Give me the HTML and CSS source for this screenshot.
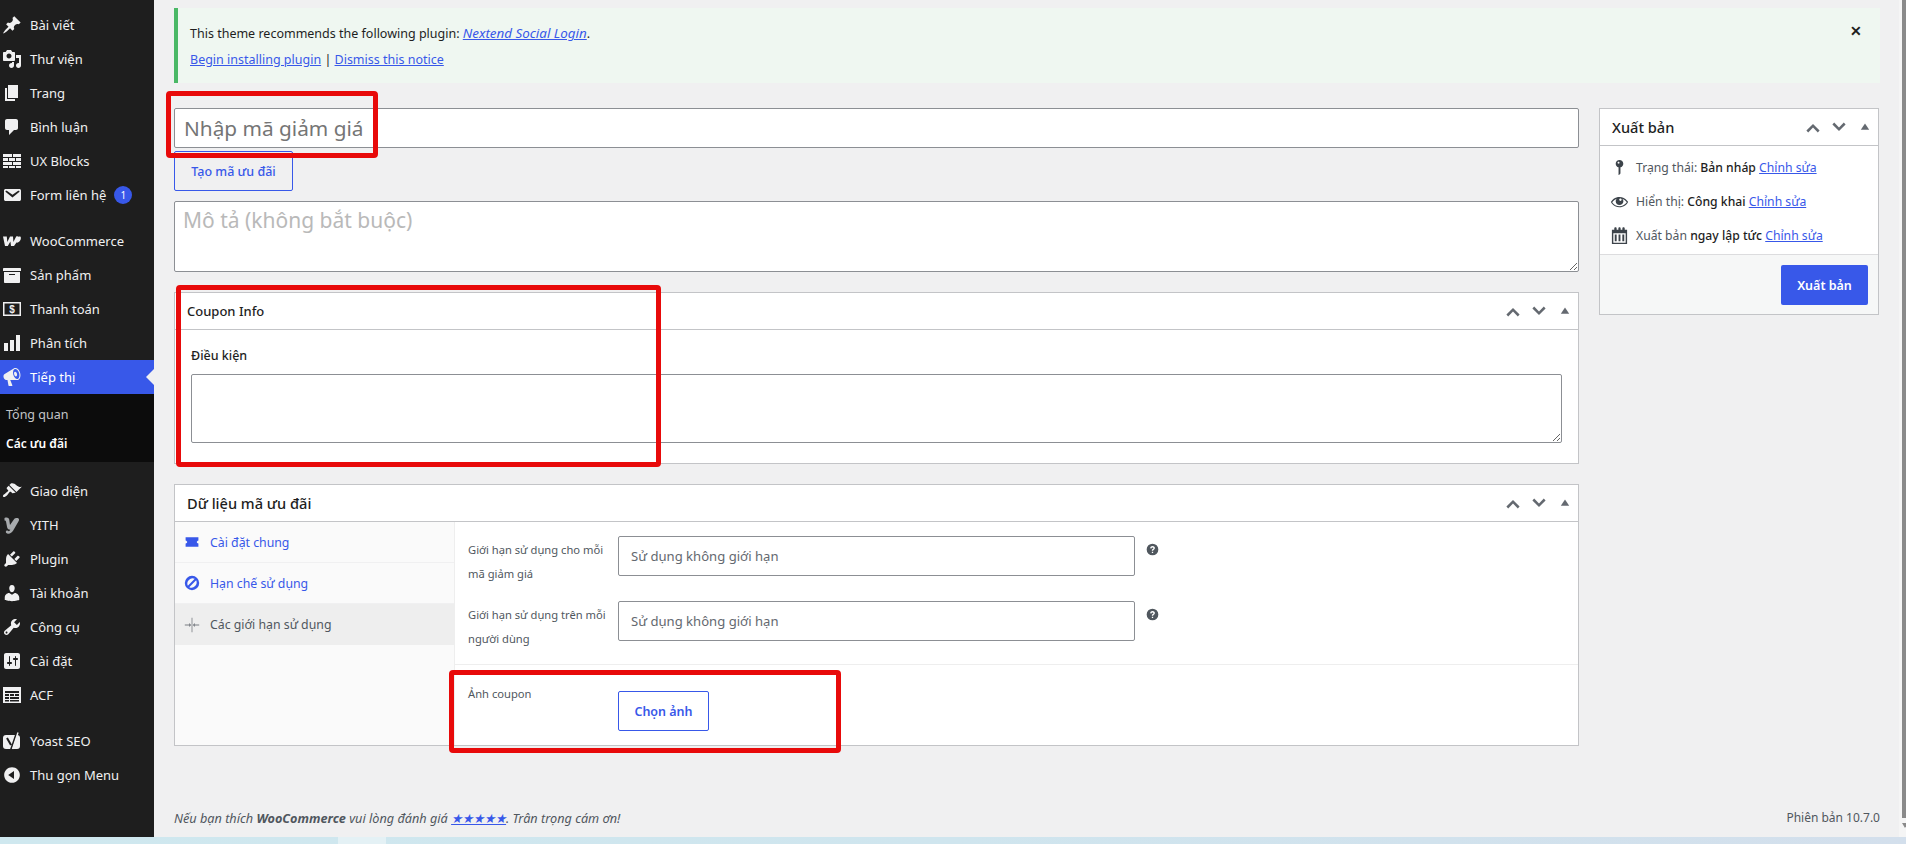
FILE: index.html
```html
<!DOCTYPE html>
<html lang="vi">
<head>
<meta charset="utf-8">
<title>Thêm mã ưu đãi</title>
<link rel="stylesheet" href="styles.css">
</head>
<body>
<svg class="sprite" aria-hidden="true">
<symbol id="i-post" viewBox="0 0 20 20"><path d="M10.44 3.02l1.82-1.82 6.36 6.35-1.83 1.82c-1.05-.68-2.48-.57-3.41.36l-.75.75c-.92.93-1.04 2.35-.35 3.41l-1.83 1.82-2.41-2.41-2.8 2.79c-.42.42-3.38 2.71-3.8 2.29s1.86-3.39 2.28-3.81l2.79-2.79L4.1 9.36l1.83-1.82c1.05.69 2.48.57 3.4-.36l.75-.75c.93-.92 1.05-2.35.36-3.41z"/></symbol>
<symbol id="i-media" viewBox="0 0 20 20"><path d="M13 11V4c0-.55-.45-1-1-1h-1.67L9 1H5L3.67 3H2c-.55 0-1 .45-1 1v7c0 .55.45 1 1 1h10c.55 0 1-.45 1-1zM7 4.5c1.38 0 2.5 1.12 2.5 2.5S8.38 9.5 7 9.5 4.5 8.38 4.5 7 5.62 4.5 7 4.5zM14 6h5v10.5c0 1.38-1.12 2.5-2.5 2.5S14 17.88 14 16.5s1.12-2.5 2.5-2.5c.17 0 .34.02.5.05V9h-3V6zm-4 8.05V13h2v3.5c0 1.38-1.12 2.5-2.5 2.5S7 17.88 7 16.5 8.12 14 9.5 14c.17 0 .34.02.5.05z"/></symbol>
<symbol id="i-page" viewBox="0 0 20 20"><path d="M6 15V2h10v13H6zm-1 1h8v2H3V5h2v11z"/></symbol>
<symbol id="i-comment" viewBox="0 0 20 20"><path d="M5 2h9c1.1 0 2 .9 2 2v7c0 1.1-.9 2-2 2h-2l-5 5v-5H5c-1.1 0-2-.9-2-2V4c0-1.1.9-2 2-2z"/></symbol>
<symbol id="i-blocks" viewBox="0 0 20 20"><path d="M1 3h9v3H1zM11 3h8v3h-8zM1 7h5v3H1zM7 7h6v3H7zM14 7h5v3h-5zM1 11h9v3H1zM11 11h8v3h-8zM1 15h5v2H1zM7 15h6v2H7zM14 15h5v2h-5z"/></symbol>
<symbol id="i-mail" viewBox="0 0 20 20"><path d="M3.87 4h13.25C18.37 4 19 4.59 19 5.79v8.42c0 1.19-.63 1.79-1.88 1.79H3.87c-1.25 0-1.88-.6-1.88-1.79V5.79c0-1.2.63-1.79 1.88-1.79zm6.62 8.6l6.74-5.53c.24-.2.43-.66.13-1.07-.29-.41-.82-.42-1.17-.17l-5.7 3.86L4.8 5.83c-.35-.25-.88-.24-1.17.17-.3.41-.11.87.13 1.07z"/></symbol>
<symbol id="i-woo" viewBox="0 0 20 20"><path d="M1 5.500h3.800l.5 5.500 2.700-5.500h3l.4 5.500 2.800-5.500c1-.5 2-.2 2.600.3 1.100-.5 2-.2 2.100 1 .2 1.800-1.200 4-3 4.700-.5.200-1 .2-1.400 0L12 15h-3l-.6-4.500L5.800 15H3z"/></symbol>
<symbol id="i-archive" viewBox="0 0 20 20"><path d="M19 4v2H1V4c0-.55.45-1 1-1h16c.55 0 1 .45 1 1zM2 7h16v10c0 .55-.45 1-1 1H3c-.55 0-1-.45-1-1V7zm11 3V9H7v1h6z"/></symbol>
<symbol id="i-pay" viewBox="0 0 20 20"><path fill-rule="evenodd" d="M1 3h18v14H1zM2.500 4.500v11h15v-11z"/><text x="10" y="14" text-anchor="middle" font-size="10" font-weight="700" font-family="Liberation Sans, sans-serif">$</text></symbol>
<symbol id="i-chart" viewBox="0 0 20 20"><path d="M18 18V2h-4v16h4zm-6 0V7H8v11h4zm-6 0v-8H2v8h4z"/></symbol>
<symbol id="i-mega" viewBox="0 0 20 20"><path d="M18.150 5.940c.46 1.620.38 3.220-.02 4.480-.42 1.280-1.260 2.180-2.300 2.480-.16.06-.26.06-.4.06-.06.02-.12.02-.18.02-.06.02-.14.02-.22.02h-6.800l2.220 5.500c.02.14-.06.26-.14.34-.08.1-.24.16-.34.16H6.950c-.1 0-.26-.06-.34-.16-.08-.08-.16-.2-.14-.34l-1-5.500H4.250l-.02-.02c-.5.06-1.080-.18-1.540-.62s-.88-1.080-1.060-1.880c-.24-.8-.2-1.560-.02-2.200.18-.62.58-1.080 1.060-1.300l.02-.02 9-5.400c.1-.06.18-.1.24-.16.06-.04.14-.08.24-.12.16-.08.28-.12.5-.18 1.040-.3 2.240.1 3.220.98s1.840 2.240 2.260 3.860zm-2.580 5.980h-.02c.4-.1.74-.34 1.040-.7.58-.7.86-1.760.86-3.040-.02-.64-.1-1.300-.28-1.980-.34-1.360-1.020-2.500-1.780-3.240s-1.680-1.100-2.460-.88c-.82.22-1.400.96-1.700 2-.32 1.040-.28 2.360.06 3.720.38 1.360 1 2.500 1.800 3.240.78.74 1.620 1.100 2.480.88zm-2.540-7.080c.22-.04.42-.02.62.04.38.16.76.48 1.020 1s.42 1.200.42 1.780c0 .3-.04.56-.12.8-.18.48-.44.84-.86.94-.34.1-.8-.06-1.140-.46-.38-.4-.68-.94-.84-1.600-.16-.68-.14-1.320.02-1.800.18-.48.44-.8.88-.9z"/></symbol>
<symbol id="i-brush" viewBox="0 0 20 20"><path d="M14.480 11.060L7.410 3.990l1.500-1.500c.5-.56 2.300-.47 3.510.32 1.210.8 1.430 1.280 2.910 2.100 1.180.64 2.450 1.260 4.450.85zm-.71.71L6.700 4.700 4.930 6.470c-.39.39-.39 1.020 0 1.410l1.060 1.060c.39.39.39 1.030 0 1.420-.6.6-1.430 1.110-2.210 1.690-.35.26-.7.53-1.010.84C1.430 13.230.4 14.980 1.200 15.800c.81.8 2.570-.23 3.910-1.570.31-.31.58-.66.85-1.010.58-.78 1.080-1.610 1.690-2.210.39-.39 1.020-.39 1.410 0l1.060 1.060c.39.39 1.020.39 1.410 0z"/></symbol>
<symbol id="i-yith" viewBox="0 0 20 20"><path d="M2.500 3c2.300-1 4.300-.4 4.700 1.500L8 10l4.200-6c.8-1 2.300-1.300 3.500-1 1.500.4 1.700 1.900 1 3l-5.500 9.500c-1.200 2-3.200 3.500-5.400 3.200-1.700-.2-2.500-1.600-1.700-2.700.8-.9 2-.5 2.600.3.700-.2 1.200-.8 1.600-1.600-2 0-3-1.100-3.300-3L4 6.500c-.1-.8-.6-1.100-1.500-1z"/></symbol>
<symbol id="i-plugin" viewBox="0 0 20 20"><path d="M13.110 4.360L9.870 7.600 8 5.730l3.240-3.240c.35-.34 1.050-.2 1.560.32.52.51.66 1.210.31 1.550zm-8 1.770l.91-1.120 9.010 9.010-1.190.84c-.71.71-2.630 1.160-3.820 1.160H6.140L4.900 17.260c-.59.59-1.540.59-2.120 0-.59-.58-.59-1.530 0-2.120l1.240-1.240v-3.880c0-1.130.4-3.190 1.090-3.890zm7.260 3.970l3.240-3.240c.34-.35 1.040-.21 1.550.31.52.51.66 1.210.31 1.550l-3.240 3.250z"/></symbol>
<symbol id="i-user" viewBox="0 0 20 20"><path d="M10 9.250c-2.270 0-2.730-3.440-2.730-3.440C7 4.020 7.820 2 9.970 2c2.160 0 2.980 2.020 2.710 3.810 0 0-.41 3.440-2.680 3.440zm0 2.570L12.720 10c2.390 0 4.520 2.330 4.520 4.530v2.490s-3.650 1.130-7.240 1.130c-3.650 0-7.240-1.130-7.240-1.130v-2.490c0-2.250 1.940-4.480 4.470-4.480z"/></symbol>
<symbol id="i-tool" viewBox="0 0 20 20"><path d="M16.680 9.770c-1.340 1.340-3.300 1.670-4.950.99l-5.410 6.520c-.99.99-2.590.99-3.580 0s-.99-2.590 0-3.570l6.520-5.420c-.68-1.650-.35-3.610.99-4.950 1.280-1.280 3.120-1.620 4.720-1.060l-2.890 2.890 2.820 2.820 2.860-2.870c.53 1.580.18 3.390-1.080 4.650zM3.810 16.210c.4.39 1.040.39 1.430 0 .4-.4.4-1.040 0-1.430-.39-.4-1.030-.4-1.430 0-.39.39-.39 1.030 0 1.430z"/></symbol>
<symbol id="i-settings" viewBox="0 0 20 20"><path d="M18 16V4c0-1.100-.9-2-2-2H4c-1.100 0-2 .9-2 2v12c0 1.100.9 2 2 2h12c1.100 0 2-.9 2-2zM8 11h1c.55 0 1 .45 1 1s-.45 1-1 1H8v1.500c0 .28-.22.5-.5.5s-.5-.22-.5-.5V13H6c-.55 0-1-.45-1-1s.45-1 1-1h1V5.500c0-.28.22-.5.5-.5s.5.22.5.5V11zm5-2h-1c-.55 0-1-.45-1-1s.45-1 1-1h1V5.500c0-.28.22-.5.5-.5s.5.22.5.5V7h1c.55 0 1 .45 1 1s-.45 1-1 1h-1v5.500c0 .28-.22.5-.5.5s-.5-.22-.5-.5V9z"/></symbol>
<symbol id="i-acf" viewBox="0 0 20 20"><path fill-rule="evenodd" d="M1 2h18v16H1zM3 6v2h14V6zM3 9v2h4V9zM3 12v2h4v-2zM3 15v1.500h4V15zM8 9v2h4V9zM8 12v2h9v-2zM8 15v1.500h9V15zM13 9v2h4V9z"/></symbol>
<symbol id="i-yoast" viewBox="0 0 20 20"><rect x="1" y="4" width="17" height="14" rx="3"/><path d="M5 7l4 7M14.500 2.500L9 18.500" fill="none" stroke="#1e1e1e" stroke-width="2"/><path d="M16 1.500L10.500 18" fill="none" stroke="#f0f0f1" stroke-width="1.400"/></symbol>
<symbol id="i-collapse" viewBox="0 0 20 20"><path d="M10 2.160c4.330 0 7.840 3.510 7.840 7.840s-3.510 7.840-7.840 7.840S2.160 14.330 2.160 10 5.710 2.160 10 2.160zm2 11.720V6.120L6.180 9.970z"/></symbol>
<symbol id="i-status" viewBox="0 0 20 20"><path d="M14 6c0 1.860-1.280 3.410-3 3.860V16c0 1-2 2-2 2V9.860c-1.720-.45-3-2-3-3.860 0-2.210 1.790-4 4-4s4 1.790 4 4zM8 5c0 .55.45 1 1 1s1-.45 1-1-.45-1-1-1-1 .45-1 1z"/></symbol>
<symbol id="i-eye" viewBox="0 0 20 20"><path d="M18.300 9.500C15 4.900 8.500 3.800 3.900 7.200c-1.200.9-2.200 2.100-3 3.400.2.400.5.8.8 1.200 3.300 4.600 9.600 5.600 14.200 2.400.9-.7 1.700-1.400 2.400-2.400.3-.4.5-.8.8-1.200-.3-.4-.5-.8-.8-1.100zm-8.200-2.300c.5-.5 1.300-.5 1.800 0s.5 1.300 0 1.800-1.300.5-1.800 0c-.5-.4-.5-1.300 0-1.800zm-.1 7.700c-3.100 0-6-1.600-7.700-4.200C3.500 9 5.100 7.800 7 7c-.7.800-1 1.700-1 2.700 0 2.200 1.700 4.100 4 4.100 2.200 0 4.100-1.700 4.100-4 0-1-.4-2-1.100-2.700 1.900.8 3.500 2 4.700 3.700-1.700 2.600-4.600 4.200-7.700 4.100z"/></symbol>
<symbol id="i-cal" viewBox="0 0 20 20"><path fill-rule="evenodd" d="M2 4h2.500V2.500C4.500 1.700 5 1.200 5.800 1.200S7 1.700 7 2.500V4h1.800V2.500c0-.8.5-1.300 1.200-1.300s1.200.5 1.200 1.300V4H13V2.500c0-.8.5-1.300 1.200-1.300s1.300.5 1.300 1.300V4H18v15H2zM3.500 7.500v10h13v-10zM5 9h2v7H5zM9 9h2v7H9zM13 9h2v7h-2z"/></symbol>
<symbol id="i-ticket" viewBox="0 0 20 20"><path d="M2 4h16v4c-1.200.4-2 1.100-2 2s.8 1.600 2 2v4H2v-4c1.200-.4 2-1.100 2-2s-.8-1.600-2-2z"/></symbol>
<symbol id="i-ban" viewBox="0 0 20 20"><path fill-rule="evenodd" d="M10 1a9 9 0 1 1 0 18 9 9 0 0 1 0-18zM4.800 13.400L13.400 4.800A6.500 6.500 0 0 0 4.800 13.400zM6.600 15.200A6.500 6.500 0 0 0 15.200 6.600z"/></symbol>
<symbol id="i-split" viewBox="0 0 20 20"><path d="M9.500 1h1v18h-1zM1 9.500h5.500V7.500L9 10l-2.500 2.500v-2H1zM19 9.500h-5.500V7.500L11 10l2.500 2.500v-2H19z"/></symbol>
<symbol id="i-up" viewBox="0 0 20 20"><path d="M3.400 13.600L10 7l6.600 6.600-1.800 1.800L10 10.600l-4.800 4.800z"/></symbol>
<symbol id="i-down" viewBox="0 0 20 20"><path d="M3.400 7.400L10 14l6.600-6.600-1.800-1.800L10 10.400 5.200 5.600z"/></symbol>
<symbol id="i-tri" viewBox="0 0 20 20"><path d="M10 5l6 9H4z"/></symbol>
<symbol id="i-help" viewBox="0 0 20 20"><path d="M10 1a9 9 0 1 0 0 18 9 9 0 0 0 0-18zm1 14.500H9V13.500h2zm2.600-7c-.3.900-1 1.400-1.600 1.900-.6.400-1 .8-1 1.600H9c0-1.400.7-2.100 1.400-2.600.6-.4 1-.7 1-1.400 0-.7-.6-1.100-1.400-1.100-.9 0-1.500.5-1.600 1.400l-2-.3C6.600 5.800 8.100 4.600 10 4.600c2.400 0 4.100 1.700 3.600 3.900z"/></symbol>
</svg>

<div class="screen">
  <nav class="menu">
    <a class="item"><svg class="mi"><use href="#i-post"/></svg>Bài viết</a>
    <a class="item"><svg class="mi"><use href="#i-media"/></svg>Thư viện</a>
    <a class="item"><svg class="mi"><use href="#i-page"/></svg>Trang</a>
    <a class="item"><svg class="mi"><use href="#i-comment"/></svg>Bình luận</a>
    <a class="item"><svg class="mi"><use href="#i-blocks"/></svg>UX Blocks</a>
    <a class="item"><svg class="mi"><use href="#i-mail"/></svg>Form liên hệ<span class="badge">1</span></a>
    <div class="sep"></div>
    <a class="item"><svg class="mi"><use href="#i-woo"/></svg>WooCommerce</a>
    <a class="item"><svg class="mi"><use href="#i-archive"/></svg>Sản phẩm</a>
    <a class="item"><svg class="mi"><use href="#i-pay"/></svg>Thanh toán</a>
    <a class="item"><svg class="mi"><use href="#i-chart"/></svg>Phân tích</a>
    <a class="item active"><svg class="mi"><use href="#i-mega"/></svg>Tiếp thị</a>
    <div class="submenu">
      <a class="subitem">Tổng quan</a>
      <a class="subitem current">Các ưu đãi</a>
    </div>
    <div class="sep"></div>
    <a class="item"><svg class="mi"><use href="#i-brush"/></svg>Giao diện</a>
    <a class="item"><svg class="mi dim"><use href="#i-yith"/></svg>YITH</a>
    <a class="item"><svg class="mi"><use href="#i-plugin"/></svg>Plugin</a>
    <a class="item"><svg class="mi"><use href="#i-user"/></svg>Tài khoản</a>
    <a class="item"><svg class="mi"><use href="#i-tool"/></svg>Công cụ</a>
    <a class="item"><svg class="mi"><use href="#i-settings"/></svg>Cài đặt</a>
    <a class="item"><svg class="mi"><use href="#i-acf"/></svg>ACF</a>
    <div class="sep"></div>
    <a class="item"><svg class="mi"><use href="#i-yoast"/></svg>Yoast SEO</a>
    <a class="item"><svg class="mi"><use href="#i-collapse"/></svg>Thu gọn Menu</a>
  </nav>

  <main class="main">
    <div class="notice">
      <p class="notice-line">This theme recommends the following plugin: <a class="link"><em class="plugin-name">Nextend Social Login</em></a>.</p>
      <p class="notice-line"><a class="link">Begin installing plugin</a> | <a class="link">Dismiss this notice</a></p>
      <span class="notice-close">✕</span>
    </div>

    <div class="columns">
      <div class="col-main">
        <input class="title-input" type="text" placeholder="Nhập mã giảm giá">
        <button class="btn-outline create-btn" type="button">Tạo mã ưu đãi</button>
        <textarea class="desc-input" placeholder="Mô tả (không bắt buộc)"></textarea>

        <section class="box info-box">
          <header class="box-head">
            <h2 class="box-title">Coupon Info</h2>
            <div class="ctrls"><svg class="ctrl"><use href="#i-up"/></svg><svg class="ctrl"><use href="#i-down"/></svg><svg class="ctrl tri"><use href="#i-tri"/></svg></div>
          </header>
          <div class="info-body">
            <label class="info-label">Điều kiện</label>
            <textarea class="info-text"></textarea>
          </div>
        </section>

        <section class="box data-box">
          <header class="box-head">
            <h2 class="box-title wide">Dữ liệu mã ưu đãi</h2>
            <div class="ctrls"><svg class="ctrl"><use href="#i-up"/></svg><svg class="ctrl"><use href="#i-down"/></svg><svg class="ctrl tri"><use href="#i-tri"/></svg></div>
          </header>
          <div class="data-body">
            <ul class="tabs">
              <li class="tab"><svg class="ti"><use href="#i-ticket"/></svg>Cài đặt chung</li>
              <li class="tab"><svg class="ti"><use href="#i-ban"/></svg>Hạn chế sử dụng</li>
              <li class="tab on"><svg class="ti"><use href="#i-split"/></svg>Các giới hạn sử dụng</li>
            </ul>
            <div class="panel">
              <div class="limits">
                <div class="field">
                  <label class="field-label">Giới hạn sử dụng cho mỗi mã giảm giá</label>
                  <input class="field-input" type="text" placeholder="Sử dụng không giới hạn">
                  <svg class="help"><use href="#i-help"/></svg>
                </div>
                <div class="field">
                  <label class="field-label">Giới hạn sử dụng trên mỗi người dùng</label>
                  <input class="field-input" type="text" placeholder="Sử dụng không giới hạn">
                  <svg class="help"><use href="#i-help"/></svg>
                </div>
              </div>
              <div class="field image-field">
                <label class="field-label short">Ảnh coupon</label>
                <button class="btn-outline pick-btn" type="button">Chọn ảnh</button>
              </div>
            </div>
          </div>
        </section>
      </div>

      <aside class="box side-box">
        <header class="box-head side-head">
          <h2 class="box-title wide">Xuất bản</h2>
          <div class="ctrls"><svg class="ctrl"><use href="#i-up"/></svg><svg class="ctrl"><use href="#i-down"/></svg><svg class="ctrl tri"><use href="#i-tri"/></svg></div>
        </header>
        <div class="side-rows">
          <div class="side-row"><svg class="si"><use href="#i-status"/></svg><span>Trạng thái: <b class="strong">Bản nháp</b> <a class="link">Chỉnh sửa</a></span></div>
          <div class="side-row"><svg class="si"><use href="#i-eye"/></svg><span>Hiển thị: <b class="strong">Công khai</b> <a class="link">Chỉnh sửa</a></span></div>
          <div class="side-row"><svg class="si"><use href="#i-cal"/></svg><span>Xuất bản <b class="strong">ngay lập tức</b> <a class="link">Chỉnh sửa</a></span></div>
        </div>
        <div class="side-foot"><button class="btn-primary" type="button">Xuất bản</button></div>
      </aside>
    </div>

    <footer class="foot">
      <span class="foot-text">Nếu bạn thích <b>WooCommerce</b> vui lòng đánh giá <a class="link">★★★★★</a>. Trân trọng cám ơn!</span>
      <span class="foot-ver">Phiên bản 10.7.0</span>
    </footer>
  </main>

  <div class="scrollbar"><div class="thumb"></div><div class="arrow"></div></div>
</div>
<div class="strip"></div>

<div class="mark mark-a"></div>
<div class="mark mark-b"></div>
<div class="mark mark-c"></div>
</body>
</html>
```

FILE: styles.css
```css
* { box-sizing: border-box; }
html, body { margin: 0; height: 844px; overflow: hidden; }
body {
  position: relative;
  font-family: "Noto Sans", "Open Sans", sans-serif;
  font-size: 12.5px;
  color: #1e1e1e;
  background: #f0f0f1;
}
.sprite { display: none; }

.screen { display: flex; height: 837px; }
.strip {
  height: 7px;
  background:
    linear-gradient(#e4f1f5, #e4f1f5) 338px 0 / 48px 100% no-repeat,
    linear-gradient(90deg, #cfe8ef, #cfe5ee 50%, #d3dfec);
}

/* side menu */
.menu {
  width: 154px;
  flex: none;
  padding-top: 8px;
  background: #1e1e1e;
  color: #f0f0f1;
  display: flex;
  flex-direction: column;
}
.item {
  height: 34px;
  flex: none;
  display: flex;
  align-items: center;
  gap: 8px;
  padding-left: 2px;
  position: relative;
  font-size: 13px;
  white-space: nowrap;
}
.mi { width: 20px; height: 20px; fill: #f0f0f1; flex: none; }
.mi.dim { fill: #a7aaad; }
.sep { height: 12px; flex: none; }
.badge {
  width: 18px;
  height: 18px;
  border-radius: 50%;
  background: #3858e9;
  color: #fff;
  font-size: 10px;
  display: flex;
  align-items: center;
  justify-content: center;
}
.item.active { background: #3858e9; color: #fff; }
.item.active::after {
  content: "";
  position: absolute;
  right: 0;
  top: 50%;
  margin-top: -8px;
  border: 8px solid transparent;
  border-right-color: #f0f0f1;
  border-left-width: 0;
}
.submenu {
  height: 68px;
  flex: none;
  background: #0c0c0c;
  padding-top: 6px;
  display: flex;
  flex-direction: column;
}
.subitem { height: 29px; line-height: 29px; padding-left: 6px; color: #c3c4c7; font-size: 12.5px; }
.subitem.current { color: #fff; font-weight: 600; font-size: 12px; }

/* content */
.main {
  flex: 1;
  min-width: 0;
  padding: 8px 19px 0 20px;
  display: flex;
  flex-direction: column;
}
.link { color: #3858e9; text-decoration: underline; }
.notice {
  position: relative;
  height: 75px;
  flex: none;
  padding: 15px 12px 0 12px;
  border-left: 4px solid #4ab866;
  background: #eff7f1;
}
.notice-line { margin: 0 0 6px; line-height: 20px; font-size: 12.5px; }
.plugin-name { font-size: 13.400px; }
.notice-close {
  position: absolute;
  right: 18px;
  top: 13px;
  font-size: 14px;
  line-height: 20px;
  font-weight: 700;
  color: #1e1e1e;
}
.columns {
  display: grid;
  grid-template-columns: 1405px 280px;
  gap: 20px;
  align-items: start;
  margin-top: 25px;
}
.col-main { display: flex; flex-direction: column; align-items: stretch; }
.title-input {
  height: 40px;
  padding: 0 9px;
  border: 1px solid #8c8f94;
  border-radius: 2px;
  background: #fff;
  font: 20.800px "Noto Sans", sans-serif;
  outline: none;
}
.title-input::placeholder { color: #757575; opacity: 1; }
.btn-outline {
  border: 1px solid #3858e9;
  border-radius: 2px;
  background: transparent;
  color: #3858e9;
  font: 500 12.5px "Noto Sans", sans-serif;
  padding: 0;
}
.create-btn { width: 119px; height: 40px; margin-top: 3px; }
.desc-input {
  height: 71px;
  margin-top: 10px;
  padding: 4px 8px;
  border: 1px solid #8c8f94;
  border-radius: 2px;
  background: #fff;
  font: 21px "Noto Sans", sans-serif;
  outline: none;
  display: block;
}
.desc-input::placeholder { color: #b9b9b9; opacity: 1; }

.box { border: 1px solid #c3c4c7; background: #fff; }
.box-head {
  height: 37px;
  display: flex;
  align-items: center;
  justify-content: space-between;
  padding: 0 3px 0 12px;
  border-bottom: 1px solid #c3c4c7;
}
.box-title { margin: 0; font-size: 13px; font-weight: 500; color: #1e1e1e; }
.box-title.wide { font-size: 14.600px; }
.ctrls { display: flex; align-items: center; gap: 6px; }
.ctrl { width: 20px; height: 20px; fill: #646970; flex: none; }
.ctrl.tri { width: 20px; height: 20px; transform: scale(.7); }

.info-box { height: 172px; margin-top: 20px; }
.info-body { padding: 0 16px; }
.info-label { display: block; padding-top: 16px; line-height: 20px; font-size: 12.5px; font-weight: 500; color: #1e1e1e; }
.info-text {
  display: block;
  width: 100%;
  height: 69px;
  margin-top: 8px;
  border: 1px solid #8c8f94;
  border-radius: 2px;
  background: #fff;
  outline: none;
}

.data-box { height: 262px; margin-top: 20px; }
.data-body { display: flex; height: 223px; }
.tabs {
  width: 280px;
  flex: none;
  margin: 0;
  padding: 0;
  list-style: none;
  background: #fafafa;
  border-right: 1px solid #eee;
}
.tab {
  height: 41px;
  display: flex;
  align-items: center;
  gap: 10px;
  padding-left: 9px;
  color: #3858e9;
  font-size: 12.3px;
  border-bottom: 1px solid #f0f0f1;
}
.tab.on { color: #50575e; background: #eeeeee; border-bottom: 0; }
.ti { width: 16px; height: 16px; fill: currentColor; flex: none; }
.tab.on .ti { fill: #787c82; }
.panel { flex: 1; min-width: 0; }
.limits { height: 143px; padding-top: 14px; border-bottom: 1px solid #eee; }
.field { display: flex; align-items: flex-start; gap: 8px; padding-left: 13px; }
.field + .field { margin-top: 15px; }
.field-label { width: 142px; flex: none; color: #50575e; font-size: 11.2px; line-height: 24px; margin-top: 2px; }
.field-input {
  width: 517px;
  height: 40px;
  padding: 0 12px;
  border: 1px solid #8c8f94;
  border-radius: 2px;
  background: #fff;
  font: 13.100px "Noto Sans", sans-serif;
  outline: none;
}
.field-input::placeholder { color: #646970; opacity: 1; }
.help { width: 13px; height: 13px; margin: 7px 0 0 3px; fill: #50575e; flex: none; }
.image-field { padding-top: 10px; }
.field-label.short { line-height: 20px; margin-top: 9px; }
.pick-btn { width: 91px; height: 40px; margin-top: 16px; font-weight: 600; }

/* publish box */
.side-box { height: 207px; }
.side-head { height: 37px; }
.side-rows { height: 108px; padding-top: 4px; }
.side-row {
  height: 34px;
  display: flex;
  align-items: center;
  gap: 7px;
  padding-left: 10px;
  font-size: 12.2px;
  color: #50575e;
  white-space: nowrap;
}
.si { width: 19px; height: 19px; fill: #3c434a; flex: none; }
.strong { font-weight: 500; color: #1e1e1e; }
.side-foot {
  height: 60px;
  display: flex;
  justify-content: flex-end;
  padding: 10px 10px 0 0;
  background: #f6f7f7;
  border-top: 1px solid #dcdcde;
}
.btn-primary {
  width: 87px;
  height: 40px;
  border: 0;
  border-radius: 2px;
  background: #3858e9;
  color: #fff;
  font: 600 12.5px "Noto Sans", sans-serif;
}

.foot {
  margin-top: auto;
  height: 28px;
  display: flex;
  justify-content: space-between;
  align-items: flex-start;
  font-size: 12px;
  color: #50575e;
}
.foot-text { font-style: italic; font-size: 12.700px; }

.scrollbar {
  width: 7px;
  flex: none;
  position: relative;
  background: #f5f5f5;
}
.thumb { width: 4px; height: 818px; margin-left: 3px; background: #8a8a8a; }
.arrow {
  width: 0;
  margin: 5px 0 0 3px;
  border: 3px solid transparent;
  border-top: 5px solid #8a8a8a;
}

/* red annotations drawn over the screenshot */
.mark {
  position: absolute;
  border: 5px solid #e80a0a;
  border-radius: 4px;
  pointer-events: none;
}
.mark-a { left: 166px; top: 91px; width: 212px; height: 67px; }
.mark-b { left: 176px; top: 285px; width: 485px; height: 182px; }
.mark-c { left: 449px; top: 670px; width: 392px; height: 83px; }
```
